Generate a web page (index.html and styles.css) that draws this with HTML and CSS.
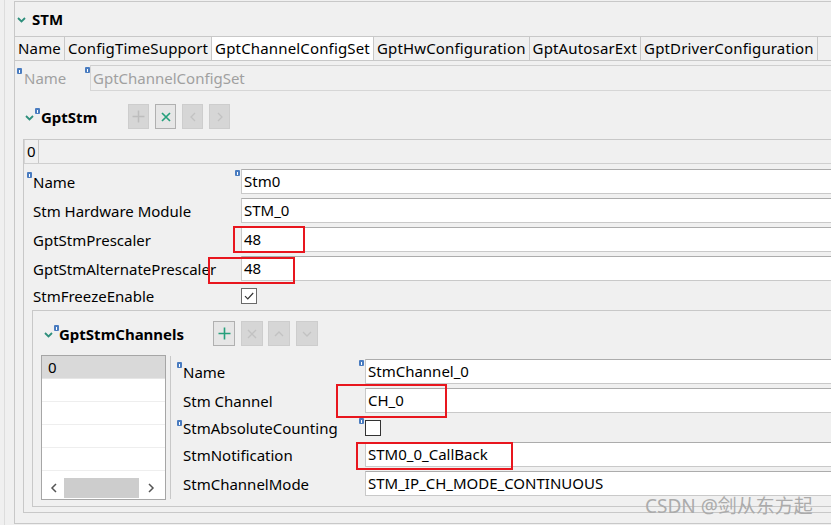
FILE: index.html
```html
<!DOCTYPE html>
<html>
<head>
<meta charset="utf-8">
<link rel="stylesheet" href="styles.css">
</head>
<body>
<div class="frame">
  <div class="frame-line">
    <div class="section">
      <div class="sec-head">
        <svg class="chev" width="9" height="6" viewBox="0 0 9 6"><path d="M1 1l3.5 3.5L8 1" fill="none" stroke="#2e8f7c" stroke-width="1.8"/></svg>
        <span class="sec-title">STM</span>
      </div>
      <div class="tabs">
        <div class="tab">Name</div>
        <div class="tab">ConfigTimeSupport</div>
        <div class="tab tab-active">GptChannelConfigSet</div>
        <div class="tab">GptHwConfiguration</div>
        <div class="tab">GptAutosarExt</div>
        <div class="tab">GptDriverConfiguration</div>
      </div>
      <div class="tab-body">
        <div class="name-row">
          <div class="lbl-dis"><i class="info"></i>Name</div>
          <div class="val-dis"><i class="info"></i><div class="field-dis">GptChannelConfigSet</div></div>
        </div>

        <div class="group-head stm-head">
          <div class="gh-left">
            <svg class="chev" width="9" height="6" viewBox="0 0 9 6"><path d="M1 1l3.5 3.5L8 1" fill="none" stroke="#2e8f7c" stroke-width="1.8"/></svg>
            <span class="group-title"><i class="info"></i>GptStm</span>
          </div>
          <div class="toolbar">
            <div class="btn off"><svg width="13" height="13" viewBox="0 0 13 13"><path d="M6.5 0.5v12M0.5 6.5h12" stroke="#bdbdbd" stroke-width="1.5" fill="none"/></svg></div>
            <div class="btn on"><svg width="10" height="10" viewBox="0 0 10 10"><path d="M1 1l8 8M9 1l-8 8" stroke="#26a07c" stroke-width="1.7" fill="none"/></svg></div>
            <div class="btn off"><svg width="6" height="10" viewBox="0 0 6 10"><path d="M5 1L1 5l4 4" stroke="#c2c2c2" stroke-width="1.3" fill="none"/></svg></div>
            <div class="btn off"><svg width="6" height="10" viewBox="0 0 6 10"><path d="M1 1l4 4-4 4" stroke="#c2c2c2" stroke-width="1.3" fill="none"/></svg></div>
          </div>
        </div>

        <div class="stm-box">
          <div class="idx-strip"><div class="idx-tab">0</div></div>
          <div class="form stm-form">
            <div class="row">
              <div class="lbl"><i class="info"></i>Name</div>
              <div class="val"><i class="info"></i><div class="field">Stm0</div></div>
            </div>
            <div class="row">
              <div class="lbl">Stm Hardware Module</div>
              <div class="val"><div class="field">STM_0</div></div>
            </div>
            <div class="row">
              <div class="lbl">GptStmPrescaler</div>
              <div class="val"><div class="field">48</div></div>
            </div>
            <div class="row">
              <div class="lbl">GptStmAlternatePrescaler</div>
              <div class="val"><div class="field">48</div></div>
            </div>
            <div class="row row-check">
              <div class="lbl">StmFreezeEnable</div>
              <div class="val"><div class="check"><svg width="14" height="14" viewBox="0 0 14 14"><path d="M3 7.2l2.8 2.8L11.2 4" stroke="#333" stroke-width="1.2" fill="none"/></svg></div></div>
            </div>
          </div>

          <div class="ch-box">
            <div class="group-head ch-head">
              <div class="gh-left">
                <svg class="chev" width="9" height="6" viewBox="0 0 9 6"><path d="M1 1l3.5 3.5L8 1" fill="none" stroke="#2e8f7c" stroke-width="1.8"/></svg>
                <span class="group-title"><i class="info"></i>GptStmChannels</span>
              </div>
              <div class="toolbar">
                <div class="btn on"><svg width="13" height="13" viewBox="0 0 13 13"><path d="M6.5 0.5v12M0.5 6.5h12" stroke="#26a07c" stroke-width="1.6" fill="none"/></svg></div>
                <div class="btn off"><svg width="10" height="10" viewBox="0 0 10 10"><path d="M1 1l8 8M9 1l-8 8" stroke="#c2c2c2" stroke-width="1.4" fill="none"/></svg></div>
                <div class="btn off"><svg width="10" height="6" viewBox="0 0 10 6"><path d="M1 5l4-4 4 4" stroke="#c2c2c2" stroke-width="1.3" fill="none"/></svg></div>
                <div class="btn off"><svg width="10" height="6" viewBox="0 0 10 6"><path d="M1 1l4 4 4-4" stroke="#c2c2c2" stroke-width="1.3" fill="none"/></svg></div>
              </div>
            </div>
            <div class="ch-body">
              <div class="list">
                <div class="list-rows">
                  <div class="list-row sel">0</div>
                  <div class="list-row"></div>
                  <div class="list-row"></div>
                  <div class="list-row"></div>
                  <div class="list-row"></div>
                </div>
                <div class="hscroll">
                  <svg width="7" height="10" viewBox="0 0 7 10"><path d="M6 1L2 5l4 4" stroke="#555" stroke-width="1.5" fill="none"/></svg>
                  <div class="thumb"></div>
                  <svg width="7" height="10" viewBox="0 0 7 10"><path d="M1 1l4 4-4 4" stroke="#555" stroke-width="1.5" fill="none"/></svg>
                </div>
              </div>
              <div class="vsep"></div>
              <div class="form ch-form">
                <div class="row">
                  <div class="lbl"><i class="info"></i>Name</div>
                  <div class="val"><i class="info"></i><div class="field">StmChannel_0</div></div>
                </div>
                <div class="row">
                  <div class="lbl">Stm Channel</div>
                  <div class="val"><div class="field">CH_0</div></div>
                </div>
                <div class="row row-check">
                  <div class="lbl"><i class="info"></i>StmAbsoluteCounting</div>
                  <div class="val"><i class="info"></i><div class="check dark"></div></div>
                </div>
                <div class="row">
                  <div class="lbl">StmNotification</div>
                  <div class="val"><div class="field">STM0_0_CallBack</div></div>
                </div>
                <div class="row">
                  <div class="lbl">StmChannelMode</div>
                  <div class="val"><div class="field">STM_IP_CH_MODE_CONTINUOUS</div></div>
                </div>
              </div>
            </div>
          </div>
        </div>
      </div>
    </div>
  </div>
</div>

<div class="mark mark1"></div>
<div class="mark mark2"></div>
<div class="mark mark3"></div>
<div class="mark mark4"></div>
<div class="watermark">CSDN @剑从东方起</div>
</body>
</html>
```

FILE: styles.css
```css
* { box-sizing: border-box; }
html, body { margin: 0; padding: 0; }
body {
  width: 831px;
  height: 525px;
  overflow: hidden;
  background: #f0f0f0;
  font-family: "Noto Sans", "Open Sans", sans-serif;
  font-size: 15px;
  color: #000;
  position: relative;
}
.frame { height: 525px; padding-left: 4px; }
.frame-line {
  height: 100%;
  border-left: 1px solid #dddddd;
  padding-left: 9px;
  padding-top: 1px;
}
.section {
  width: 830px;
  height: 523px;
  border: 1px solid #c8c8c8;
  border-right: none;
  display: flex;
  flex-direction: column;
}
.sec-head {
  height: 34px;
  flex: none;
  display: flex;
  align-items: center;
  padding-left: 2px;
}
.chev { flex: none; margin-top: 2px; }
.sec-title { font-weight: bold; margin-left: 6px; }

.tabs {
  flex: none;
  display: flex;
  height: 25px;
  border-top: 1px solid #c8c8c8;
  border-bottom: 1px solid #c8c8c8;
}
.tab {
  line-height: 23px;
  padding: 0 3px;
  letter-spacing: 0.16px;
  border-right: 1px solid #c8c8c8;
  white-space: nowrap;
}
.tab-active { background: #fff; }

.tab-body {
  flex: 1;
  display: flex;
  flex-direction: column;
  padding-top: 4px;
  padding-bottom: 10px;
  min-height: 0;
}
.info {
  position: absolute;
  left: 0;
  top: 3px;
  width: 5px;
  height: 6px;
  background: #4a7cc0;
  border-radius: 1px;
}
.info::after {
  content: "";
  position: absolute;
  left: 2px;
  top: 2px;
  width: 1px;
  height: 3px;
  background: #fff;
}

.name-row { display: flex; height: 26px; padding-left: 2px; flex: none; }
.lbl-dis {
  position: relative;
  width: 68px;
  padding-left: 7px;
  color: #a0a0a0;
  line-height: 26px;
}
.val-dis { position: relative; flex: 1; display: flex; padding-left: 5px; }
.val-dis .info { top: 2px; }
.field-dis {
  flex: 1;
  border: 1px solid #d6d6d6;
  border-top-color: #cfcfcf;
  border-right: none;
  color: #a0a0a0;
  padding-left: 2px;
  line-height: 24px;
}

.group-head { display: flex; height: 25px; flex: none; }
.stm-head { margin-top: 13px; padding-left: 10px; }
.stm-head .gh-left { width: 103px; }
.gh-left { display: flex; align-items: center; }
.group-title { position: relative; font-weight: bold; padding-left: 6px; margin-left: 1px; }
.group-title .info { top: 1px; }
.ch-head .group-title { padding-left: 5px; margin-left: 1px; }
.ch-head .gh-left { width: 169px; }
.toolbar { display: flex; gap: 6px; }
.ch-head .toolbar { gap: 5.5px; }
.btn {
  width: 21px;
  height: 25px;
  display: flex;
  align-items: center;
  justify-content: center;
  border: 1px solid #cdcdcd;
}
.btn.off { background: #d6d6d6; }
.btn.on { background: #e6e6e6; border-color: #b0b0b0; }
.ch-head .btn { width: 22px; }

.stm-box {
  flex: 1;
  display: flex;
  flex-direction: column;
  margin-top: 10px;
  margin-left: 8px;
  border-top: 1px solid #c8c8c8;
  border-left: 1px solid #c8c8c8;
  border-bottom: 1px solid #c8c8c8;
  padding-bottom: 5px;
  min-height: 0;
}
.idx-strip {
  flex: none;
  height: 24px;
  border-bottom: 1px solid #cfcfcf;
  display: flex;
}
.idx-tab {
  width: 15px;
  border-left: 1px solid #d6d6d6;
  border-right: 1px solid #c8c8c8;
  padding-left: 2px;
  line-height: 23px;
}

.form { display: flex; flex-direction: column; gap: 4px; }
.stm-form { padding-top: 5px; padding-left: 3px; flex: none; }
.row { display: flex; height: 25px; align-items: center; }
.row-check { height: 21px; }
.lbl {
  position: relative;
  height: 100%;
  display: flex;
  align-items: center;
  padding-left: 6px;
  white-space: nowrap;
  flex: none;
}
.stm-form .lbl { width: 208px; }
.ch-form .lbl { width: 182px; }
.val {
  position: relative;
  flex: 1;
  height: 100%;
  display: flex;
  align-items: center;
  padding-left: 6px;
}
.val .info { top: 1px; }
.field {
  flex: 1;
  height: 25px;
  background: #fff;
  border: 1px solid #c9c9c9;
  border-top-color: #acacac;
  border-right: none;
  padding-left: 2px;
  line-height: 23px;
  white-space: nowrap;
}
.check {
  width: 16px;
  height: 16px;
  border: 1px solid #6a6a6a;
  background: #fff;
  display: flex;
  align-items: center;
  justify-content: center;
}
.check.dark { border-color: #333; width: 16px; height: 16px; }

.ch-box {
  flex: 1;
  display: flex;
  flex-direction: column;
  margin-top: 4px;
  margin-left: 8px;
  border-top: 1px solid #c8c8c8;
  border-left: 1px solid #c8c8c8;
  border-bottom: 1px solid #c8c8c8;
  padding-bottom: 5px;
  min-height: 0;
}
.ch-head { margin-top: 10px; padding-left: 11px; }
.ch-body { flex: 1; display: flex; margin-top: 9px; min-height: 0; }
.list {
  flex: none;
  width: 125px;
  height: 145px;
  margin-left: 8px;
  background: #fff;
  border: 1px solid #a6a6a6;
  display: flex;
  flex-direction: column;
}
.list-rows { flex: 1; overflow: hidden; }
.list-row {
  height: 23px;
  border-bottom: 1px solid #eeeeee;
  padding-left: 6px;
  line-height: 22px;
}
.list-row.sel { background: #d9d9d9; border-bottom-color: #e6e6e6; }
.hscroll {
  flex: none;
  height: 22px;
  display: flex;
  align-items: center;
  padding: 0 8px 0 8px;
  background: #fff;
}
.thumb { width: 75px; height: 20px; background: #cdcdcd; margin: 0 9px 0 7px; }
.vsep { flex: none; width: 1px; height: 143px; margin-top: 1px; margin-left: 4px; background: #c8c8c8; }
.ch-form { flex: 1; padding-top: 4px; padding-left: 6px; }

.mark {
  position: absolute;
  border: 2px solid #e8161e;
}
.mark1 { left: 233px; top: 226px; width: 72px; height: 27px; }
.mark2 { left: 208px; top: 257px; width: 87px; height: 27px; }
.mark3 { left: 336px; top: 384px; width: 111px; height: 34px; }
.mark4 { left: 356px; top: 442px; width: 157px; height: 28px; }
.watermark {
  position: absolute;
  left: 645px;
  top: 491px;
  font-family: "Noto Sans", "Noto Sans CJK SC", sans-serif;
  font-size: 19px;
  color: #ababab;
  white-space: nowrap;
}
```
